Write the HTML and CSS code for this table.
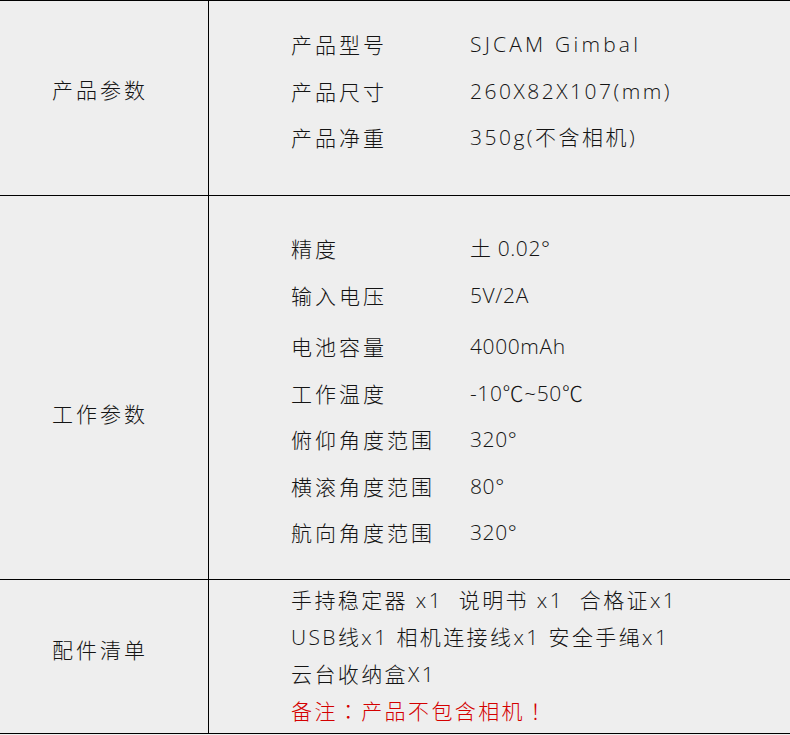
FILE: index.html
```html
<!DOCTYPE html>
<html lang="zh">
<head>
<meta charset="utf-8">
<title>参数</title>
<link rel="stylesheet" href="styles.css">
</head>
<body>
<div class="spec">
  <div class="section s1">
    <div class="label">产品参数</div>
    <div class="content">
      <div class="row"><span class="key">产品型号</span><span class="val v1 wide">SJCAM Gimbal</span></div>
      <div class="row"><span class="key">产品尺寸</span><span class="val v1">260X82X107(mm)</span></div>
      <div class="row"><span class="key">产品净重</span><span class="val v1">350g(不含相机)</span></div>
    </div>
  </div>
  <div class="section s2">
    <div class="label">工作参数</div>
    <div class="content">
      <div class="row"><span class="key">精度</span><span class="val v2">土 0.02°</span></div>
      <div class="row"><span class="key">输入电压</span><span class="val v2">5V/2A</span></div>
      <div class="row gap"><span class="key">电池容量</span><span class="val v2">4000mAh</span></div>
      <div class="row"><span class="key">工作温度</span><span class="val v2">-10℃~50℃</span></div>
      <div class="row"><span class="key">俯仰角度范围</span><span class="val v2">320°</span></div>
      <div class="row"><span class="key">横滚角度范围</span><span class="val v2">80°</span></div>
      <div class="row"><span class="key">航向角度范围</span><span class="val v2">320°</span></div>
    </div>
  </div>
  <div class="section s3">
    <div class="label">配件清单</div>
    <div class="content">
      <div class="line">手持稳定器 x1&nbsp; 说明书 x1&nbsp; 合格证x1</div>
      <div class="line">USB线x1 相机连接线x1 安全手绳x1</div>
      <div class="line">云台收纳盒X1</div>
      <div class="line note">备注<span class="punct" lang="zh-TW">：</span>产品不包含相机<span class="punct" lang="zh-TW">！</span></div>
    </div>
  </div>
</div>
</body>
</html>
```

FILE: styles.css
```css
html, body {
  margin: 0;
  padding: 0;
  background: #eeeeee;
}
body {
  width: 790px;
  height: 735px;
  overflow: hidden;
  font-family: "Open Sans", "Noto Sans CJK SC", sans-serif;
  font-size: 21px;
  font-weight: 300;
  color: #141414;
}
.spec {
  border-top: 1px solid #000;
}
.section {
  display: grid;
  grid-template-columns: 208px 1fr;
  border-bottom: 1px solid #000;
  box-sizing: border-box;
}
.s1 { height: 195px; }
.s2 { height: 384px; }
.s3 { height: 154px; }
.label {
  padding-left: 52px;
  line-height: 46px;
  letter-spacing: 3px;
  font-family: "Noto Sans CJK SC", sans-serif;
}
.s1 .label { padding-top: 65px; }
.s2 .label { padding-top: 194px; }
.s3 .label { padding-top: 46px; }
.content {
  border-left: 1px solid #000;
  padding-left: 82px;
}
.s1 .content { padding-top: 20px; }
.s2 .content { padding-top: 29px; }
.s3 .content { padding-top: 2px; }
.row {
  display: flex;
  line-height: 46.5px;
  white-space: nowrap;
}
.row.gap { margin-top: 5px; }
.key {
  width: 179px;
  letter-spacing: 3px;
  font-family: "Noto Sans CJK SC", sans-serif;
}
.val.v1 { letter-spacing: 2.5px; }
.val.v1.wide { letter-spacing: 3.2px; }
.val.v2 { letter-spacing: 0.6px; }
.line {
  line-height: 36.8px;
  letter-spacing: 2.4px;
  white-space: nowrap;
}
.note {
  color: #d40000;
  font-family: "Noto Sans CJK SC", sans-serif;
}
.punct {
  font-family: "Noto Sans CJK TC", sans-serif;
}
```
